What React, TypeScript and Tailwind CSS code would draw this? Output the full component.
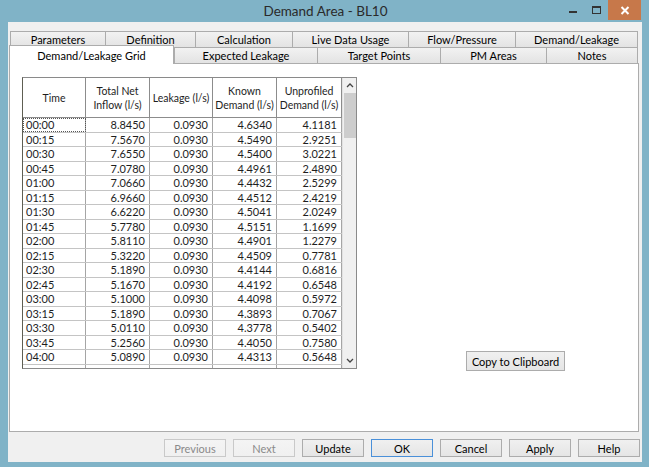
import React from "react";

const rows: [string, string, string, string, string][] = [
  ["00:00", "8.8450", "0.0930", "4.6340", "4.1181"],
  ["00:15", "7.5670", "0.0930", "4.5490", "2.9251"],
  ["00:30", "7.6550", "0.0930", "4.5400", "3.0221"],
  ["00:45", "7.0780", "0.0930", "4.4961", "2.4890"],
  ["01:00", "7.0660", "0.0930", "4.4432", "2.5299"],
  ["01:15", "6.9660", "0.0930", "4.4512", "2.4219"],
  ["01:30", "6.6220", "0.0930", "4.5041", "2.0249"],
  ["01:45", "5.7780", "0.0930", "4.5151", "1.1699"],
  ["02:00", "5.8110", "0.0930", "4.4901", "1.2279"],
  ["02:15", "5.3220", "0.0930", "4.4509", "0.7781"],
  ["02:30", "5.1890", "0.0930", "4.4144", "0.6816"],
  ["02:45", "5.1670", "0.0930", "4.4192", "0.6548"],
  ["03:00", "5.1000", "0.0930", "4.4098", "0.5972"],
  ["03:15", "5.1890", "0.0930", "4.3893", "0.7067"],
  ["03:30", "5.0110", "0.0930", "4.3778", "0.5402"],
  ["03:45", "5.2560", "0.0930", "4.4050", "0.7580"],
  ["04:00", "5.0890", "0.0930", "4.4313", "0.5648"],
];

const colW = ["w-[63px]", "w-[64px]", "w-[63px]", "w-[64px]", "w-[65px]"];

const topTabs = [
  { label: "Parameters", w: "w-[95px]" },
  { label: "Definition", w: "w-[90px]" },
  { label: "Calculation", w: "w-[97px]" },
  { label: "Live Data Usage", w: "w-[116px]" },
  { label: "Flow/Pressure", w: "w-[107px]" },
  { label: "Demand/Leakage", w: "w-[123px] border-r" },
];

const frontTabs = [
  { label: "Expected Leakage", w: "w-[143px]" },
  { label: "Target Points", w: "w-[123px]" },
  { label: "PM Areas", w: "w-[106px]" },
  { label: "Notes", w: "w-[92px] border-r" },
];

function Tab({ label, w }: { label: string; w: string }) {
  return (
    <div
      className={`${w} h-[16px] border-l border-t border-[#acacac] bg-gradient-to-b from-[#f2f2f2] to-[#e3e3e3] flex items-center justify-center text-[11px] leading-none text-black`}
    >
      {label}
    </div>
  );
}

function Button({
  label,
  disabled,
  focused,
  w = "w-[62px]",
}: {
  label: string;
  disabled?: boolean;
  focused?: boolean;
  w?: string;
}) {
  const border = disabled
    ? "border-[#c9c9c9] text-[#8a8a8a] from-[#f4f4f4] to-[#f0f0f0]"
    : focused
    ? "border-[#4a90d9] text-black from-[#f0f0f0] to-[#e5e5e5]"
    : "border-[#acacac] text-black from-[#f0f0f0] to-[#e5e5e5]";
  return (
    <div
      className={`${w} h-[18px] border ${border} bg-gradient-to-b flex items-center justify-center text-[11px] leading-none`}
    >
      {label}
    </div>
  );
}

function Grid() {
  return (
    <div className="w-[335px] h-[292px] border border-[#8a8a8a] border-l-[#5e5e52] bg-white flex overflow-hidden">
      <div className="flex flex-col w-[319px]">
        {/* header */}
        <div className="flex h-[40px] border-b border-[#8c8c8c] shrink-0">
          {["Time", "Total Net\nInflow (l/s)", "Leakage (l/s)", "Known\nDemand (l/s)", "Unprofiled\nDemand (l/s)"].map(
            (h, i) => (
              <div
                key={i}
                className={`${colW[i]} border-r border-[#8c8c8c] flex items-center justify-center text-center whitespace-pre text-[10.5px] leading-[14px] text-[#1e1e1e]`}
              >
                {h}
              </div>
            )
          )}
        </div>
        {/* rows */}
        {[...rows, ["", "", "", "", ""] as [string, string, string, string, string]].map((r, ri) => (
          <div key={ri} className="flex h-[14.5px] border-b border-[#c4c4c4] shrink-0">
            {r.map((c, ci) => (
              <div
                key={ci}
                className={`${colW[ci]} border-r border-[#a5a5a5] flex items-center text-[11px] leading-none text-[#1e1e1e] ${
                  ci === 0 ? "justify-start pl-[3px]" : "justify-end pr-[4px]"
                } ${ri === 0 && ci === 0 ? "outline outline-1 outline-dotted outline-[#555] -outline-offset-1" : ""}`}
              >
                {c}
              </div>
            ))}
          </div>
        ))}
      </div>
      {/* scrollbar */}
      <div className="w-[15px] h-full bg-[#f0f0f0] border-l border-[#e2e2e2] flex flex-col items-center">
        <div className="h-[15px] w-full flex items-center justify-center">
          <svg width="8" height="5" viewBox="0 0 8 5">
            <path d="M1 4 L4 1 L7 4" stroke="#444" strokeWidth="1.3" fill="none" />
          </svg>
        </div>
        <div className="w-[12px] h-[45px] bg-[#cdcdcd]" />
        <div className="flex-1" />
        <div className="h-[16px] w-full flex items-center justify-center">
          <svg width="8" height="5" viewBox="0 0 8 5">
            <path d="M1 1 L4 4 L7 1" stroke="#444" strokeWidth="1.3" fill="none" />
          </svg>
        </div>
      </div>
    </div>
  );
}

export default function App() {
  return (
    <div
      className="w-[649px] h-[467px] bg-[#80b3c7] flex flex-col overflow-hidden"
      style={{ fontFamily: "Lato, 'Noto Sans', sans-serif" }}
    >
      {/* title bar */}
      <div className="h-[22px] shrink-0 flex items-start relative">
        <div className="flex-1 h-full flex items-center justify-center text-[13.5px] text-[#2a2a2a] pl-[2px]">
          Demand Area - BL10
        </div>
        <div className="absolute right-[8px] top-0 flex items-start">
          <div className="w-[22px] h-[20px] flex items-center justify-center">
            <div className="w-[8px] h-[2px] bg-[#333] mt-[4px]" />
          </div>
          <div className="w-[24px] h-[20px] flex items-center justify-center">
            <div className="w-[9px] h-[8px] border border-[#333] border-t-2" />
          </div>
          <div className="w-[33px] h-[20px] bg-[#c7784a] flex items-center justify-center">
            <svg width="10" height="9" viewBox="0 0 10 9">
              <path d="M1.5 1 L8.5 8 M8.5 1 L1.5 8" stroke="#fff" strokeWidth="2" />
            </svg>
          </div>
        </div>
      </div>

      {/* client area */}
      <div className="ml-[8px] w-[634px] h-[440px] bg-[#f0f0f0] flex flex-col">
        <div className="h-[9px] shrink-0" />
        {/* tab row 1 */}
        <div className="flex ml-[2px] h-[16px] shrink-0">
          {topTabs.map((t) => (
            <Tab key={t.label} label={t.label} w={t.w} />
          ))}
        </div>
        {/* tab row 2 */}
        <div className="flex ml-[1px] h-[16px] items-end shrink-0">
          <div className="relative z-10 w-[165px] h-[19px] -mb-px border-l border-t border-r border-[#acacac] bg-white flex items-start justify-center pt-[4px] text-[11px] leading-none text-black">
            Demand/Leakage Grid
          </div>
          {frontTabs.map((t) => (
            <Tab key={t.label} label={t.label} w={t.w} />
          ))}
        </div>
        {/* panel */}
        <div className="ml-[1px] w-[630px] h-[369px] border border-[#acacac] bg-white flex items-start pl-[12px] pt-[13px] shrink-0">
          <Grid />
          <div className="ml-[109px] mt-[274px]">
            <Button label="Copy to Clipboard" w="w-[99px] h-[20px]" />
          </div>
        </div>
        {/* bottom buttons */}
        <div className="flex justify-end gap-[7px] pr-[2px] mt-[7px]">
          <Button label="Previous" disabled />
          <Button label="Next" disabled />
          <Button label="Update" />
          <Button label="OK" focused />
          <Button label="Cancel" />
          <Button label="Apply" />
          <Button label="Help" />
        </div>
      </div>
    </div>
  );
}
